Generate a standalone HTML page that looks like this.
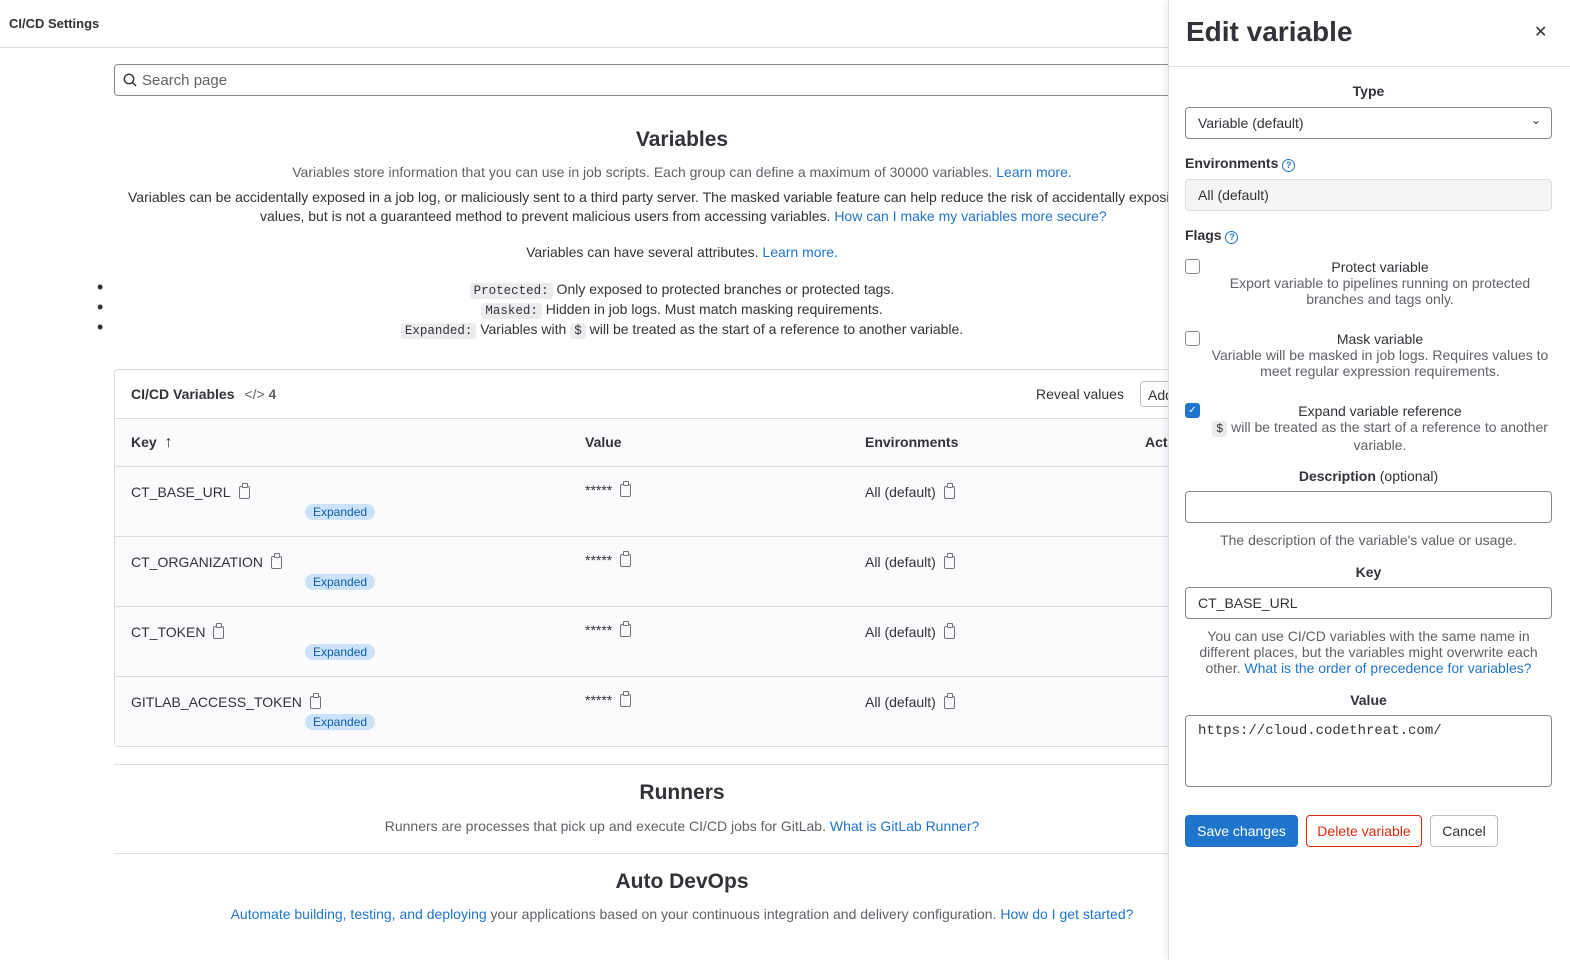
<!DOCTYPE html>
<html><head><style>
*{box-sizing:border-box;margin:0;padding:0}
body{width:1570px;height:960px;overflow:hidden;font-family:"Liberation Sans",Arial,sans-serif;color:#333238;background:#fff;position:relative;font-size:14px}
.a{position:absolute}
.c{text-align:center;left:114px;width:1136px}
a{color:#1f75cb;text-decoration:none}
code{font-family:"Liberation Mono",monospace;font-size:12.5px;background:#ececef;padding:1px 4px;border-radius:3px;line-height:14px;display:inline-block}
.row{position:absolute;left:115px;width:1060px;height:70px;border-bottom:1px solid #dcdcde;background:#fbfafd}
.badge{position:absolute;left:190px;top:37px;background:#cbe2f9;color:#0b5cad;font-size:12px;padding:1px 8px;border-radius:9px}
.clip{display:inline-block;width:11px;height:13px;border:1.5px solid #737278;border-radius:2px;vertical-align:-2px;margin-left:8px;position:relative}
.clip:before{content:"";position:absolute;left:2px;top:-4px;width:4px;height:3px;border:1.5px solid #737278;border-radius:1px;background:#fff}
.inp{position:absolute;left:1185px;width:367px;border:1px solid #89888d;border-radius:4px;height:32px;padding:7px 12px;font-size:14px}
.lbl{position:absolute;left:1185px;font-weight:bold;font-size:14px}
.help{color:#626168;font-size:14px;text-align:center;position:absolute;left:1185px;width:367px;line-height:16px}
.cb{position:absolute;left:1185px;width:15px;height:15px;border:1px solid #89888d;border-radius:3px}
.q{display:inline-block;width:13px;height:13px;border:1.3px solid #1f75cb;border-radius:50%;color:#1f75cb;font-size:9px;text-align:center;line-height:11px;vertical-align:0}
</style></head><body>
<div class="a" style="left:9px;top:16px;font-size:13px;font-weight:bold">CI/CD Settings</div>
<div class="a" style="left:0;top:47px;width:1170px;border-top:1px solid #dcdcde"></div>
<div class="a" style="left:114px;top:64px;width:1100px;height:32px;border:1px solid #89888d;border-radius:4px;padding:7px 0 0 27px;font-size:15px;color:#626168">Search page
<svg class="a" style="left:8px;top:8px" width="14" height="14" viewBox="0 0 14 14"><circle cx="6" cy="6" r="4.7" fill="none" stroke="#333" stroke-width="1.4"/><path d="M9.5 9.5L13 13" stroke="#333" stroke-width="1.4"/></svg></div>
<div class="a c" style="top:128px;font-size:21px;font-weight:bold">Variables</div>
<div class="a c" style="top:164px;color:#626168">Variables store information that you can use in job scripts. Each group can define a maximum of 30000 variables. <a>Learn more.</a></div>
<div class="a" style="left:128px;top:189px;white-space:nowrap">Variables can be accidentally exposed in a job log, or maliciously sent to a third party server. The masked variable feature can help reduce the risk of accidentally exposing variable</div>
<div class="a" style="left:260px;top:208px;white-space:nowrap">values, but is not a guaranteed method to prevent malicious users from accessing variables. <a>How can I make my variables more secure?</a></div>
<div class="a c" style="top:244px">Variables can have several attributes. <a>Learn more.</a></div>
<div class="a" style="left:97px;top:277px;line-height:20px;font-size:18px">•<br>•<br>•</div>
<div class="a c" style="top:279px;line-height:20px"><code>Protected:</code> Only exposed to protected branches or protected tags.<br><code>Masked:</code> Hidden in job logs. Must match masking requirements.<br><code>Expanded:</code> Variables with <code>$</code> will be treated as the start of a reference to another variable.</div>
<div class="a" style="left:114px;top:369px;width:1100px;height:378px;border:1px solid #dcdcde;border-radius:4px"></div>
<div class="a" style="left:131px;top:386px;font-weight:bold">CI/CD Variables <span style="font-weight:normal;color:#626168;margin-left:6px">&lt;/&gt; <b>4</b></span></div>
<div class="a" style="left:1036px;top:386px">Reveal values</div>
<div class="a" style="left:1140px;top:381px;width:60px;height:26px;border:1px solid #bfbfc3;border-radius:4px;padding:5px 7px">Add</div>
<div class="a" style="left:115px;top:418px;width:1060px;height:49px;background:#fbfafd;border-top:1px solid #dcdcde;border-bottom:1px solid #dcdcde"></div>
<div class="a" style="left:131px;top:434px;font-weight:bold">Key &nbsp;<span style="font-weight:normal;font-size:16px">↑</span></div>
<div class="a" style="left:585px;top:434px;font-weight:bold">Value</div>
<div class="a" style="left:865px;top:434px;font-weight:bold">Environments</div>
<div class="a" style="left:1145px;top:434px;font-weight:bold">Actions</div>
<div class="row" style="top:467px"><div class="a" style="left:16px;top:17px">CT_BASE_URL<span class="clip"></span></div><span class="badge">Expanded</span><div class="a" style="left:470px;top:15px">*****<span class="clip"></span></div><div class="a" style="left:750px;top:17px">All (default)<span class="clip"></span></div></div>
<div class="row" style="top:537px"><div class="a" style="left:16px;top:17px">CT_ORGANIZATION<span class="clip"></span></div><span class="badge">Expanded</span><div class="a" style="left:470px;top:15px">*****<span class="clip"></span></div><div class="a" style="left:750px;top:17px">All (default)<span class="clip"></span></div></div>
<div class="row" style="top:607px"><div class="a" style="left:16px;top:17px">CT_TOKEN<span class="clip"></span></div><span class="badge">Expanded</span><div class="a" style="left:470px;top:15px">*****<span class="clip"></span></div><div class="a" style="left:750px;top:17px">All (default)<span class="clip"></span></div></div>
<div class="row" style="top:677px;border-bottom:none;height:69px"><div class="a" style="left:16px;top:17px">GITLAB_ACCESS_TOKEN<span class="clip"></span></div><span class="badge">Expanded</span><div class="a" style="left:470px;top:15px">*****<span class="clip"></span></div><div class="a" style="left:750px;top:17px">All (default)<span class="clip"></span></div></div>
<div class="a" style="left:114px;top:764px;width:1100px;border-top:1px solid #dcdcde"></div>
<div class="a c" style="top:781px;font-size:21px;font-weight:bold">Runners</div>
<div class="a c" style="top:818px;color:#626168">Runners are processes that pick up and execute CI/CD jobs for GitLab. <a>What is GitLab Runner?</a></div>
<div class="a" style="left:114px;top:853px;width:1100px;border-top:1px solid #dcdcde"></div>
<div class="a c" style="top:870px;font-size:21px;font-weight:bold">Auto DevOps</div>
<div class="a c" style="top:906px;color:#626168"><a>Automate building, testing, and deploying</a> your applications based on your continuous integration and delivery configuration. <a>How do I get started?</a></div>

<div class="a" style="left:1168px;top:0;width:402px;height:960px;background:#fff;border-left:1px solid #dcdcde;box-shadow:-2px 0 6px rgba(0,0,0,.08)"></div>
<div class="a" style="left:1186px;top:16px;font-size:28px;font-weight:bold">Edit variable</div>
<div class="a" style="left:1534px;top:22px;font-size:16px;color:#333">✕</div>
<div class="a" style="left:1169px;top:66px;width:401px;border-top:1px solid #dcdcde"></div>
<div class="lbl" style="top:83px;width:367px;text-align:center">Type</div>
<div class="inp" style="top:107px">Variable (default)<span class="a" style="right:10px;top:5px;font-size:12px">⌄</span></div>
<div class="lbl" style="top:155px">Environments <span class="q">?</span></div>
<div class="inp" style="top:179px;background:#f5f5f5;border-color:#dcdcde">All (default)</div>
<div class="lbl" style="top:227px">Flags <span class="q">?</span></div>
<div class="cb" style="top:259px"></div>
<div class="help" style="top:259px;left:1210px;width:340px;color:#333238">Protect variable</div>
<div class="help" style="top:275px;left:1210px;width:340px">Export variable to pipelines running on protected branches and tags only.</div>
<div class="cb" style="top:331px"></div>
<div class="help" style="top:331px;left:1210px;width:340px;color:#333238">Mask variable</div>
<div class="help" style="top:347px;left:1210px;width:340px">Variable will be masked in job logs. Requires values to meet regular expression requirements.</div>
<div class="cb" style="top:403px;background:#1f75cb;border-color:#1f75cb;color:#fff;font-size:10px;text-align:center;line-height:13px">✓</div>
<div class="help" style="top:403px;left:1210px;width:340px;color:#333238">Expand variable reference</div>
<div class="help" style="top:419px;left:1210px;width:340px"><code style="color:#333;font-size:12px">$</code> will be treated as the start of a reference to another variable.</div>
<div class="lbl" style="top:468px;width:367px;text-align:center">Description <span style="font-weight:normal">(optional)</span></div>
<div class="inp" style="top:491px"></div>
<div class="help" style="top:532px">The description of the variable's value or usage.</div>
<div class="lbl" style="top:564px;width:367px;text-align:center">Key</div>
<div class="inp" style="top:587px">CT_BASE_URL</div>
<div class="help" style="top:628px">You can use CI/CD variables with the same name in different places, but the variables might overwrite each other. <a>What is the order of precedence for variables?</a></div>
<div class="lbl" style="top:692px;width:367px;text-align:center">Value</div>
<div class="inp" style="top:715px;height:72px;font-family:'Liberation Mono',monospace;font-size:14px">https://cloud.codethreat.com/</div>
<div class="a" style="left:1185px;top:815px;width:113px;height:32px;background:#1f75cb;color:#fff;border-radius:4px;text-align:center;line-height:32px">Save changes</div>
<div class="a" style="left:1306px;top:815px;width:116px;height:32px;border:1px solid #dd2b0e;color:#dd2b0e;border-radius:4px;text-align:center;line-height:30px">Delete variable</div>
<div class="a" style="left:1430px;top:815px;width:68px;height:32px;border:1px solid #bfbfc3;border-radius:4px;text-align:center;line-height:30px">Cancel</div>
</body></html>
